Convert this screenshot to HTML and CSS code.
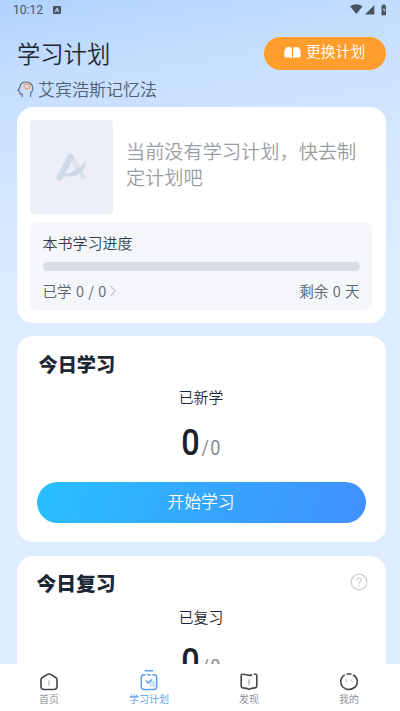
FILE: index.html
```html
<!DOCTYPE html>
<html lang="zh-CN">
<head>
<meta charset="utf-8">
<title>学习计划</title>
<link rel="stylesheet" href="styles.css">
</head>
<body>
<div class="app">
  <div class="status">
    <span class="time">10:12</span>
    <svg class="badge" width="8" height="8" viewBox="0 0 8 8"><rect width="8" height="8" rx="1" fill="#46535f"/><path d="M2 6.3 4 1.8 6 6.3M2.8 4.8h2.4" fill="none" stroke="#bcd9fe" stroke-width="1"/></svg>
    <svg class="signals" width="37" height="12" viewBox="0 0 37 12" fill="#46535f"><path d="M0 2.2Q6.3-1.6 12.6 2.2L6.3 10Z"/><path d="M24.3 1v9.5h-9.2Z"/><path d="M31.5 1.5h1V.5h2.5v1h1v9.7h-4.5Z"/><path d="m34.2 3.2-1.3 3h1.3v2.6l1.2-3.3h-1.2Z" fill="#c4deff"/></svg>
  </div>
  <header class="header">
    <h1>学习计划</h1>
    <button class="change">
      <svg width="17" height="13" viewBox="0 0 17 13" fill="#fff"><path d="M7.9 2.1v10.2Q5.5 10.9 2 11.4.4 11.6.4 10V4.5L1.7 3V1.7Q5.6-.1 7.9 2.1ZM9.1 2.1v10.2q2.4-1.4 5.9-.9 1.6.2 1.6-1.4V4.5L15.3 3V1.7Q11.400-.1 9.1 2.1Z"/></svg>
      <span>更换计划</span>
    </button>
  </header>
  <div class="method">
    <svg width="17" height="17" viewBox="0 0 17 17" fill="none" stroke-linecap="round" stroke-linejoin="round"><path d="M5.200 15.500v-2.300H3.300Q2.600 13 2.700 10.200L1 9.500 2.800 6.300C3.200 2.900 5.800 1 9 1c4 0 6.800 2.700 6.800 6.200 0 2.100-.9 3.600-2.200 4.800v3.500" stroke="#596a80" stroke-width="1.200"/><path d="M7 5.800C6 3.500 8.500 2.800 9.500 3.400c1.500-.8 3.500.5 3 2 .8 1.200-.5 2.500-1.800 2.100-1 .9-2.500.5-2.400-.5" stroke="#efa669" stroke-width="1.500"/></svg>
    <span>艾宾浩斯记忆法</span>
  </div>
  <main class="cards">
    <section class="card plan">
      <div class="book">
        <div class="cover">
          <svg width="31" height="28" viewBox="0 0 31 28" fill="none" stroke-linecap="round" stroke-linejoin="round"><path d="M15 4 27 24" stroke="#dde4ec" stroke-width="5.500"/><path d="M3.500 24.500 14.800 4" stroke="#cfd9e5" stroke-width="6"/><path d="M7.500 20.500Q20 20 30 8q-.5 11.500-10 14.500-6 1.500-12.500.5Z" fill="#cfd9e5"/><path d="m15.500 9.500-5 10q5 .2 9-2.500Z" fill="#eceff7"/></svg>
        </div>
        <p class="empty">当前没有学习计划，快去制定计划吧</p>
      </div>
      <div class="progress">
        <div class="progress-title">本书学习进度</div>
        <div class="track"></div>
        <div class="stats">
          <span class="learned">已学 0 / 0<svg width="8" height="12" viewBox="0 0 8 12"><path d="m1.500 1 5 5-5 5" fill="none" stroke="#a5abb3" stroke-width="1"/></svg></span>
          <span>剩余 0 天</span>
        </div>
      </div>
    </section>
    <section class="card study">
      <h2>今日学习</h2>
      <div class="label">已新学</div>
      <div class="count"><b>0</b><span>/0</span></div>
      <button class="start">开始学习</button>
    </section>
    <section class="card review">
      <div class="review-head">
        <h2>今日复习</h2>
        <svg width="18" height="18" viewBox="0 0 18 18" fill="none" stroke="#cdcfd1" stroke-width="1.300" stroke-linecap="round"><circle cx="9" cy="9" r="7.800"/><path d="M6.800 7.200c0-3 4.500-3 4.500-.2 0 1.600-2.200 1.700-2.200 3.500M9.100 12.900v.1"/></svg>
      </div>
      <div class="label">已复习</div>
      <div class="count"><b>0</b><span>/0</span></div>
    </section>
  </main>
  <nav class="tabs">
    <a class="tab">
      <svg width="20" height="22" viewBox="0 0 20 22" fill="none" stroke="#42464d" stroke-width="1.600" stroke-linejoin="round"><path d="M2 9.800Q2 8.500 3 7.700L8 4.600Q10 3.400 12 4.600L17 7.700Q18 8.500 18 9.800V16.500q0 3-3 3H5q-3 0-3-3Z"/><path d="M10 10.500v5" stroke="#ced1d6" stroke-width="2"/></svg>
      <span>首页</span>
    </a>
    <a class="tab active">
      <svg width="20" height="22" viewBox="0 0 20 22" fill="none" stroke="#5b9ff0" stroke-width="1.500" stroke-linejoin="round"><path d="M10.500 11h6v6h-6z" fill="#cfe4ff" stroke="none"/><path d="M6.500 4.700H5q-2.700 0-2.700 2.700V16.500q0 3 3 3h9.400q3 0 3-3V7.400q0-2.700-2.700-2.700h-1.500M8.200 4.700h3.600M5.700.8h8.600M6.800 10.500l2.300 2.500 4-3.600"/></svg>
      <span>学习计划</span>
    </a>
    <a class="tab">
      <svg width="20" height="22" viewBox="0 0 20 22" fill="none" stroke="#42464d" stroke-width="1.600" stroke-linejoin="round"><g transform="translate(0 .7)"><path d="M8.800 4.400Q5.500 3.500 3.200 3.500q-1 0-1 1V15q0 2 2 2.200Q8 17.400 10 18.700q2-1.300 5.800-1.500 2-.2 2-2.200V4.500q0-1-1-1L14.800 3.600M8.800 4.400q2.300.8 4.300-.4"/><path d="M10 8.500v6" stroke="#c5c9cf" stroke-width="2"/></g></svg>
      <span>发现</span>
    </a>
    <a class="tab">
      <svg width="20" height="22" viewBox="0 0 20 22" fill="none" stroke="#42464d" stroke-width="1.600"><g transform="translate(0 .7)"><path d="M7.500 3.300h5M5.800 4.200C.5 7 1 13.500 3.800 16.300q5.800 5 12.400 0C19.500 12.500 19 6.500 14 4.200"/><path d="m6.500 8.500 1.600 1.300-1.600 1.200M13.500 8.500l-1.600 1.300 1.600 1.200" stroke="#b3b6bb" stroke-width=".9"/></g></svg>
      <span>我的</span>
    </a>
  </nav>
</div>
</body>
</html>
```
FILE: styles.css
```css
* { box-sizing: border-box; }
body {
  margin: 0;
  font-family: "Noto Sans CJK SC", sans-serif;
  font-weight: 350;
  color: #1d2733;
}
h1, h2, p { margin: 0; }
button {
  border: 0;
  padding: 0;
  font-family: inherit;
  font-weight: inherit;
  color: #fff;
}
svg { display: block; flex: none; }
.app {
  display: flex;
  flex-direction: column;
  height: 711px;
  overflow: hidden;
  background: linear-gradient(170deg, #b0d2ff 0, #c6deff 85px, #d3e6ff 190px, #deecff 330px);
}
.status {
  display: flex;
  align-items: center;
  height: 20px;
  padding: 0 13px;
  flex: none;
}
.time {
  font: 12px/20px Roboto, sans-serif;
  color: #46535f;
}
.badge { margin-left: 10px; }
.signals { margin-left: auto; }
.header {
  display: flex;
  align-items: center;
  justify-content: space-between;
  height: 58px;
  padding: 8px 14.500px 0 17px;
  flex: none;
}
h1 {
  font-size: 23.300px;
  line-height: 34px;
  font-weight: 350;
}
.change {
  display: flex;
  align-items: center;
  gap: 5px;
  width: 121.500px;
  height: 33px;
  padding-left: 20px;
  border-radius: 17px;
  background: #ff9e2d;
  font-size: 14.800px;
  line-height: 20px;
}
.change span { padding-bottom: 4px; }
.change svg { margin-top: -2px; }
.method {
  display: flex;
  align-items: center;
  gap: 4px;
  height: 22px;
  padding-left: 17px;
  flex: none;
  font-size: 17px;
  line-height: 22px;
  color: #515f70;
}
.cards {
  flex: 1;
  min-height: 0;
  display: flex;
  flex-direction: column;
  gap: 13px;
  padding: 7px 14.500px 0 16.500px;
  overflow: hidden;
}
.card {
  flex: none;
  border-radius: 16px;
  background: #fff;
}
.plan {
  height: 215.500px;
  padding: 13px 13.500px;
}
.book {
  display: flex;
  align-items: center;
  gap: 13px;
}
.cover {
  display: flex;
  align-items: center;
  justify-content: center;
  width: 83px;
  height: 94px;
  border-radius: 4px;
  background: #eceff7;
}
.empty {
  flex: 1;
  padding-bottom: 6px;
  font-size: 19.200px;
  line-height: 26px;
  color: #9a9da1;
}
.progress {
  height: 87px;
  margin-top: 9px;
  padding: 9px 12.500px 0;
  border-radius: 6px;
  background: #f4f6fa;
}
.progress-title {
  font-size: 15px;
  line-height: 22px;
  color: #353f4b;
}
.track {
  height: 9px;
  margin: 8px 0 9px;
  border-radius: 5px;
  background: #d8dde5;
}
.stats {
  display: flex;
  justify-content: space-between;
  font-size: 14.600px;
  word-spacing: 1px;
  line-height: 22px;
  color: #5b636e;
}
.learned {
  display: flex;
  align-items: center;
  gap: 3px;
}
.study { height: 206.500px; padding: 17px 20px 0; }
.review { height: 207px; margin-top: .5px; padding: 16.500px 18px 0 20px; }
h2 {
  font-size: 19.200px;
  line-height: 22px;
  font-weight: 900;
  padding-left: 2px;
}
.review h2 { padding-left: 0; font-size: 19.800px; }
.review-head {
  display: flex;
  align-items: center;
  justify-content: space-between;
}
.review-head svg { margin-top: -3px; }
.label {
  margin-top: 12px;
  font-size: 14.800px;
  line-height: 22px;
  text-align: center;
}
.study .label { margin: 11px 0 14px; }
.study .count { margin-top: 0; }
.review .label { margin-right: 2px; }
.count {
  display: flex;
  justify-content: center;
  align-items: baseline;
  gap: 2px;
  height: 42px;
  margin-top: 13px;
  font: 20px/42px Roboto, sans-serif;
  color: #868d96;
  transform: scaleX(.9);
}
.count b {
  font-size: 36px;
  font-weight: 500;
  color: #17202b;
}
.count span { letter-spacing: 1.500px; }
.review .count { margin-right: 2px; }
.start {
  display: block;
  width: 100%;
  height: 41.500px;
  margin-top: 18px;
  padding-bottom: 3px;
  border-radius: 21px;
  background: linear-gradient(110deg, #28c0ff, #38a2ff 60%, #4190ff);
  font-size: 16.800px;
  line-height: 24px;
}
.tabs {
  display: flex;
  flex: none;
  height: 47px;
  margin: 0 1px 0 -1px;
  background: #fff;
  box-shadow: 1px 0 #fff;
}
.tab {
  flex: 1;
  display: flex;
  flex-direction: column;
  align-items: center;
  padding-top: 6px;
  font-size: 10px;
  line-height: 13px;
  color: #7f858e;
}
.active { color: #4f98f0; }
```
